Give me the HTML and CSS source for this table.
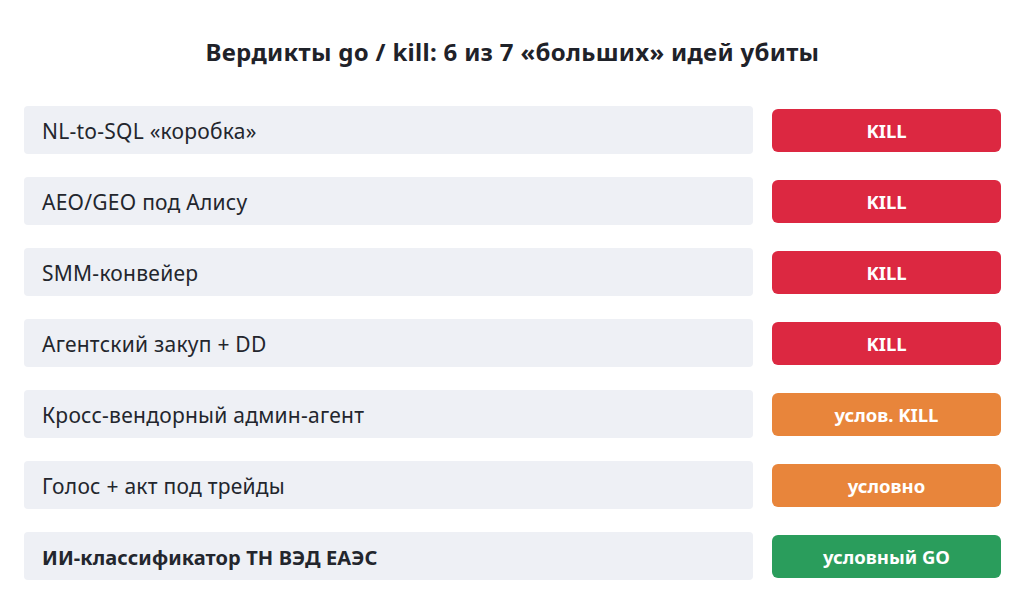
FILE: index.html
```html
<!DOCTYPE html>
<html lang="ru">
<head>
<meta charset="utf-8">
<title>Вердикты go / kill</title>
<link rel="stylesheet" href="styles.css">
</head>
<body>
<div class="page">
  <h1 class="title">Вердикты go / kill: 6 из 7 «больших» идей убиты</h1>
  <div class="list">
    <div class="row"><div class="label">NL-to-SQL «коробка»</div><div class="badge red">KILL</div></div>
    <div class="row"><div class="label">AEO/GEO под Алису</div><div class="badge red">KILL</div></div>
    <div class="row"><div class="label">SMM-конвейер</div><div class="badge red">KILL</div></div>
    <div class="row"><div class="label">Агентский закуп + DD</div><div class="badge red">KILL</div></div>
    <div class="row"><div class="label">Кросс-вендорный админ-агент</div><div class="badge orange">услов. KILL</div></div>
    <div class="row"><div class="label">Голос + акт под трейды</div><div class="badge orange">условно</div></div>
    <div class="row"><div class="label strong">ИИ-классификатор ТН ВЭД ЕАЭС</div><div class="badge green">условный GO</div></div>
  </div>
</div>
</body>
</html>
```
FILE: styles.css
```css
html, body {
  margin: 0;
  padding: 0;
  background: #ffffff;
}
.page {
  width: 1029px;
  height: 610px;
  box-sizing: border-box;
  padding: 37px 28px 0 24px;
  font-family: "Noto Sans", "Open Sans", sans-serif;
  color: #1f2229;
}
.title {
  margin: 0 0 39px 0;
  text-align: center;
  font-size: 24px;
  line-height: 30px;
  font-weight: 700;
  letter-spacing: 0.3px;
  color: #1f2229;
}
.list {
  display: flex;
  flex-direction: column;
  gap: 23px;
}
.row {
  display: grid;
  grid-template-columns: 1fr 229px;
  column-gap: 19px;
  align-items: center;
}
.label {
  height: 48px;
  display: flex;
  align-items: center;
  padding-left: 18px;
  padding-top: 2px;
  box-sizing: border-box;
  background: #eef0f5;
  border-radius: 4px;
  font-size: 21px;
  letter-spacing: 0.25px;
  color: #23262d;
}
.label.strong {
  font-weight: 700;
  font-size: 20px;
  letter-spacing: 0.1px;
}
.badge {
  height: 43px;
  border-radius: 6px;
  display: flex;
  align-items: center;
  justify-content: center;
  color: #ffffff;
  font-weight: 700;
  font-size: 18.5px;
}
.red { background: #dc2841; }
.orange { background: #e8853b; }
.green { background: #2a9d5c; }
```
